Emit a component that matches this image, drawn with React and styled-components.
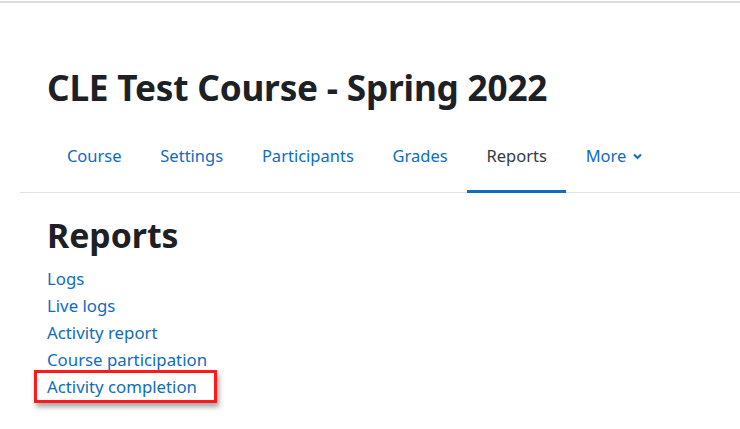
import React from 'react';
import styled, { createGlobalStyle } from 'styled-components';

const tabs = [
  { label: 'Course' },
  { label: 'Settings' },
  { label: 'Participants' },
  { label: 'Grades' },
  { label: 'Reports', active: true },
  { label: 'More', menu: true },
];

const reports = [
  { label: 'Logs' },
  { label: 'Live logs' },
  { label: 'Activity report' },
  { label: 'Course participation' },
  { label: 'Activity completion', highlighted: true },
];

const GlobalStyle = createGlobalStyle`
  body {
    margin: 0;
    background: #fff;
    font-family: "Noto Sans", "Open Sans", sans-serif;
    color: #1d2125;
  }
`;

const Page = styled.div`
  border-top: 2px solid #dcdcdc;
  margin-top: 1px;
  padding-left: 20px;
  height: 426px;
  overflow: hidden;
`;

const Header = styled.header`
  padding: 60px 0 0 27px;
`;

const Title = styled.h1`
  margin: 0;
  font-size: 35.2px;
  line-height: 48px;
  font-weight: 700;
  letter-spacing: -0.2px;
`;

const Nav = styled.ul`
  display: flex;
  list-style: none;
  margin: 10px 0 0;
  padding: 0 0 0 27.5px;
  border-bottom: 1px solid #dee2e6;
`;

const Tab = styled.li`
  display: flex;
  align-items: center;
  gap: 7px;
  padding: 23px 19.4px 22px;
  line-height: 24px;
  font-size: 16.5px;
  color: ${(p) => (p.$active ? '#343a40' : '#0f6cbf')};
  border-bottom: 3px solid ${(p) => (p.$active ? '#0f6cbf' : 'transparent')};
  margin-bottom: -1px;
`;

const Content = styled.main`
  padding: 20px 0 0 27px;
`;

const Heading = styled.h2`
  margin: 0 0 8px;
  font-size: 33.8px;
  line-height: 44px;
  font-weight: 700;
`;

const LinkList = styled.div`
  display: flex;
  flex-direction: column;
  align-items: flex-start;
`;

const ReportLink = styled.a`
  font-size: 16.8px;
  line-height: 27px;
  color: #0f6cbf;
  text-decoration: none;
`;

// annotation box drawn over the last link
const Highlight = styled.span`
  position: relative;
  display: inline-block;

  &::after {
    content: '';
    position: absolute;
    top: -3.5px;
    left: -13px;
    right: -20px;
    bottom: -2.5px;
    border: 3.5px solid #ff1a1a;
    box-shadow: 2px 4px 5px rgba(0, 0, 0, 0.35);
    pointer-events: none;
  }
`;

const Chevron = () => (
  <svg width="9" height="7" viewBox="0 0 9 7">
    <path d="M1 1.5 L4.5 5 L8 1.5" fill="none" stroke="#0f6cbf" strokeWidth="2" />
  </svg>
);

const App = () => {
  return (
    <Page>
      <GlobalStyle />
      <Header>
        <Title>CLE Test Course - Spring 2022</Title>
      </Header>
      <Nav>
        {tabs.map((tab) => (
          <Tab key={tab.label} $active={tab.active}>
            {tab.label}
            {tab.menu && <Chevron />}
          </Tab>
        ))}
      </Nav>
      <Content>
        <Heading>Reports</Heading>
        <LinkList>
          {reports.map((r) =>
            r.highlighted ? (
              <Highlight key={r.label}>
                <ReportLink href="#">{r.label}</ReportLink>
              </Highlight>
            ) : (
              <ReportLink key={r.label} href="#">{r.label}</ReportLink>
            )
          )}
        </LinkList>
      </Content>
    </Page>
  );
};

export default App;
